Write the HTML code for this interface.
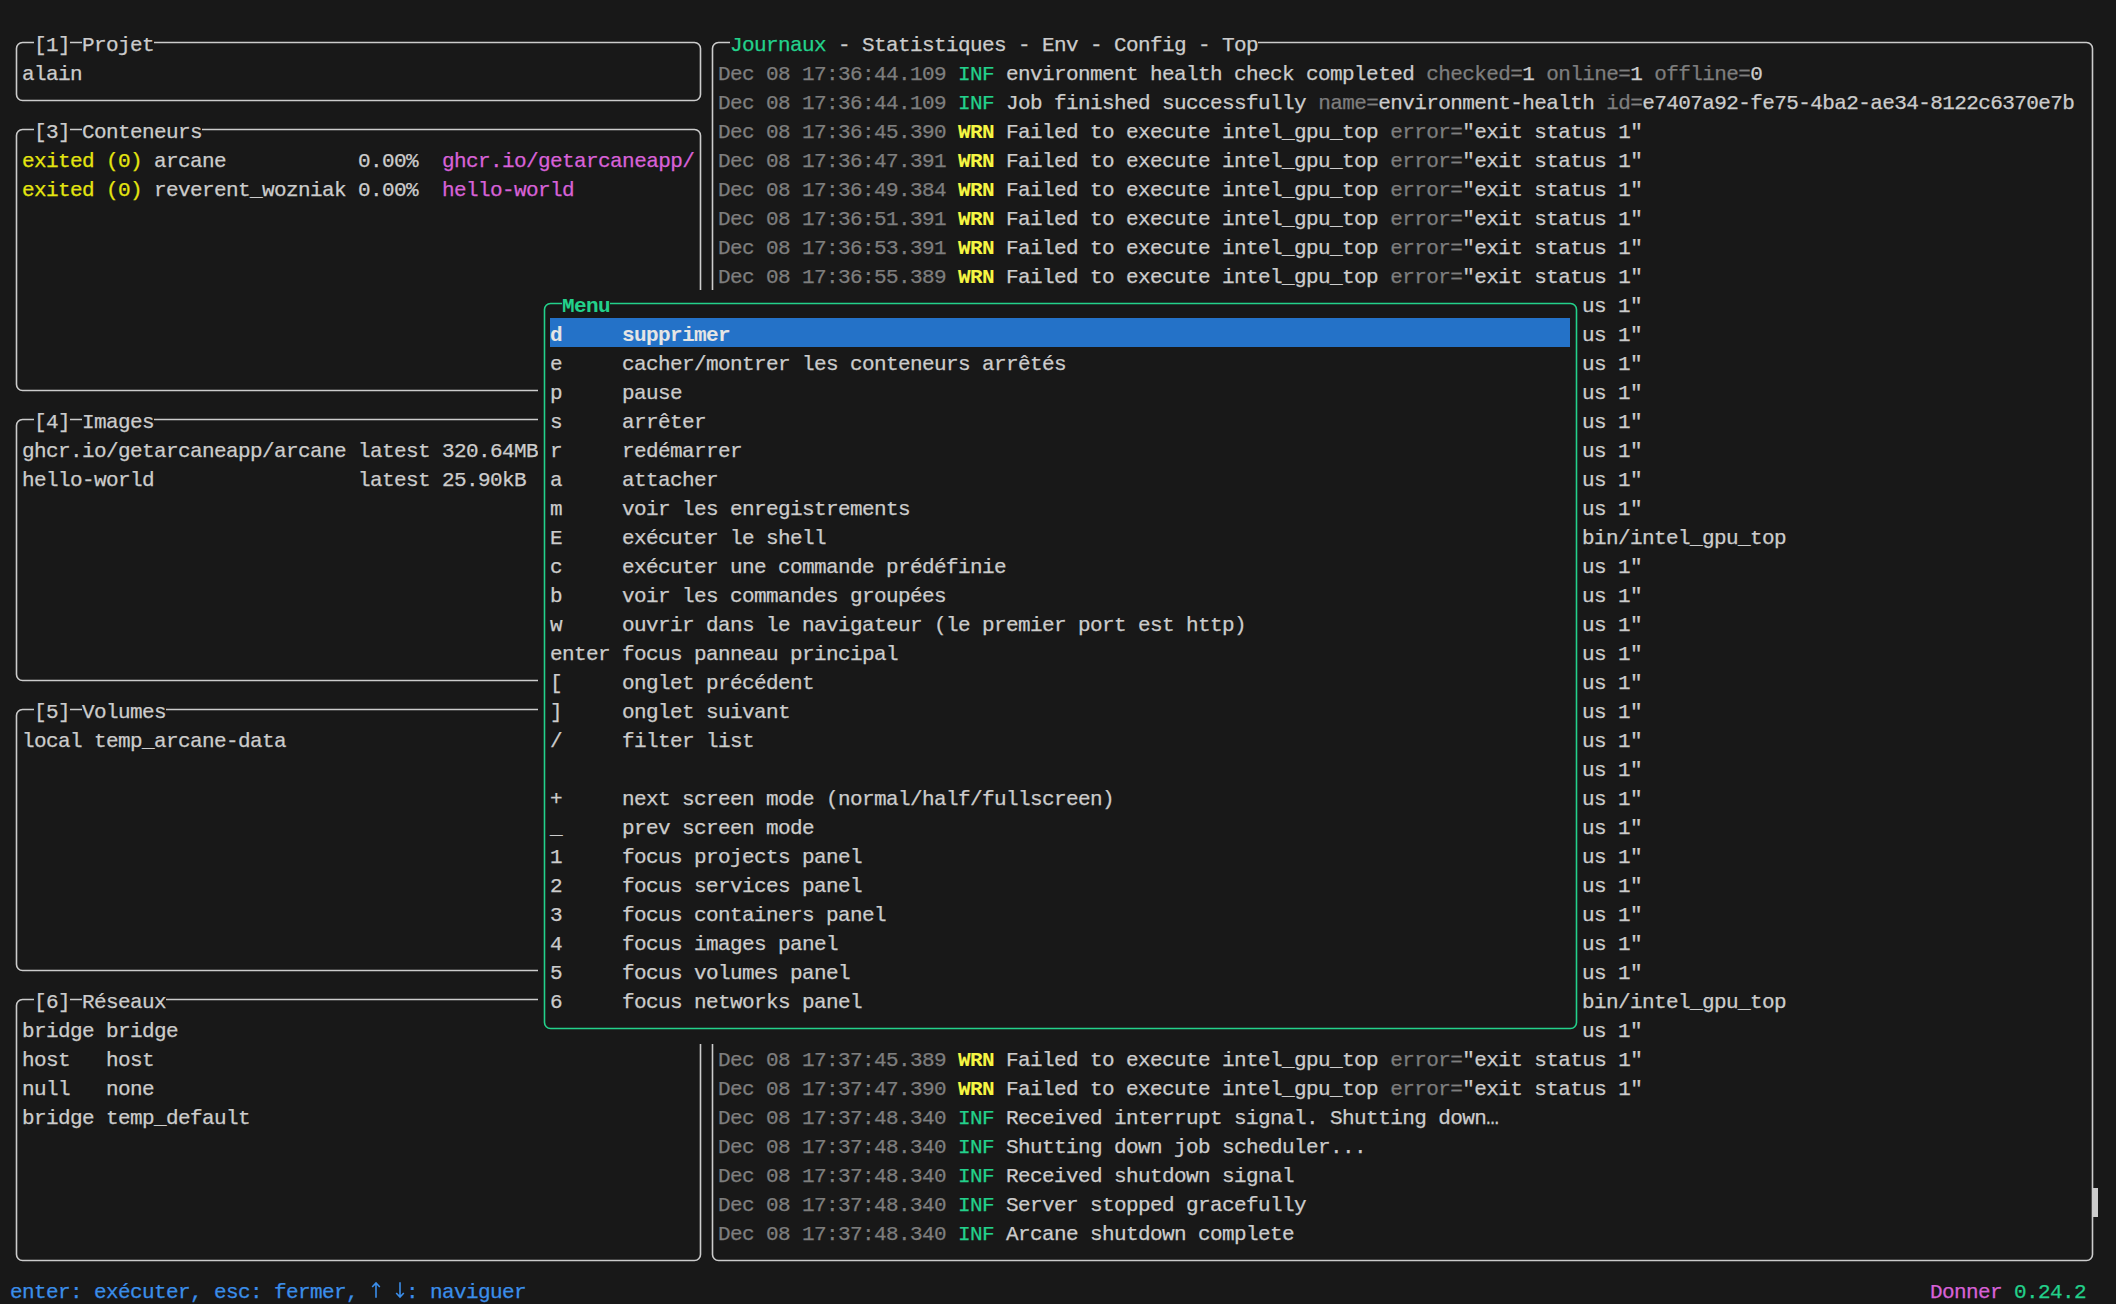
<!DOCTYPE html>
<html><head><meta charset="utf-8"><style>
html,body{margin:0;padding:0;background:#181818;width:2116px;height:1304px;overflow:hidden}
.t{position:absolute;white-space:pre;font-family:"Liberation Mono",monospace;font-size:21px;letter-spacing:-0.6px;line-height:29px;height:29px;color:#cccccc;padding-top:2px;-webkit-text-stroke:0.25px currentColor}
.l{position:absolute}
.b{position:absolute;box-sizing:border-box;border:2px solid;border-radius:6px}
.c{position:absolute;background:#181818}
.s{position:absolute;overflow:visible}
</style></head><body>
<svg class="s" style="left:10px;top:29px" width="696" height="87"><rect x="6.5" y="13.5" width="684" height="58" rx="6" ry="6" fill="none" stroke="#cccccc" stroke-width="1.6"/></svg>
<div class="c" style="left:34px;top:29px;width:36px;height:29px"></div>
<div class="c" style="left:82px;top:29px;width:72px;height:29px"></div>
<div class="t" style="left:34px;top:29px"><span style="color:#cccccc">[1]</span></div>
<div class="t" style="left:82px;top:29px"><span style="color:#cccccc">Projet</span></div>
<div class="t" style="left:22px;top:58px"><span style="color:#cccccc">alain</span></div>
<svg class="s" style="left:10px;top:116px" width="696" height="290"><rect x="6.5" y="13.5" width="684" height="261" rx="6" ry="6" fill="none" stroke="#cccccc" stroke-width="1.6"/></svg>
<div class="c" style="left:34px;top:116px;width:36px;height:29px"></div>
<div class="c" style="left:82px;top:116px;width:120px;height:29px"></div>
<div class="t" style="left:34px;top:116px"><span style="color:#cccccc">[3]</span></div>
<div class="t" style="left:82px;top:116px"><span style="color:#cccccc">Conteneurs</span></div>
<div class="t" style="left:22px;top:145px"><span style="color:#e5e510">exited (0) </span><span style="color:#cccccc">arcane           </span><span style="color:#cccccc">0.00%  </span><span style="color:#d862d8">ghcr.io/getarcaneapp/</span></div>
<div class="t" style="left:22px;top:174px"><span style="color:#e5e510">exited (0) </span><span style="color:#cccccc">reverent_wozniak </span><span style="color:#cccccc">0.00%  </span><span style="color:#d862d8">hello-world</span></div>
<svg class="s" style="left:10px;top:406px" width="696" height="290"><rect x="6.5" y="13.5" width="684" height="261" rx="6" ry="6" fill="none" stroke="#cccccc" stroke-width="1.6"/></svg>
<div class="c" style="left:34px;top:406px;width:36px;height:29px"></div>
<div class="c" style="left:82px;top:406px;width:72px;height:29px"></div>
<div class="t" style="left:34px;top:406px"><span style="color:#cccccc">[4]</span></div>
<div class="t" style="left:82px;top:406px"><span style="color:#cccccc">Images</span></div>
<div class="t" style="left:22px;top:435px"><span style="color:#cccccc">ghcr.io/getarcaneapp/arcane latest 320.64MB</span></div>
<div class="t" style="left:22px;top:464px"><span style="color:#cccccc">hello-world                 latest 25.90kB</span></div>
<svg class="s" style="left:10px;top:696px" width="696" height="290"><rect x="6.5" y="13.5" width="684" height="261" rx="6" ry="6" fill="none" stroke="#cccccc" stroke-width="1.6"/></svg>
<div class="c" style="left:34px;top:696px;width:36px;height:29px"></div>
<div class="c" style="left:82px;top:696px;width:84px;height:29px"></div>
<div class="t" style="left:34px;top:696px"><span style="color:#cccccc">[5]</span></div>
<div class="t" style="left:82px;top:696px"><span style="color:#cccccc">Volumes</span></div>
<div class="t" style="left:22px;top:725px"><span style="color:#cccccc">local temp_arcane-data</span></div>
<svg class="s" style="left:10px;top:986px" width="696" height="290"><rect x="6.5" y="13.5" width="684" height="261" rx="6" ry="6" fill="none" stroke="#cccccc" stroke-width="1.6"/></svg>
<div class="c" style="left:34px;top:986px;width:36px;height:29px"></div>
<div class="c" style="left:82px;top:986px;width:84px;height:29px"></div>
<div class="t" style="left:34px;top:986px"><span style="color:#cccccc">[6]</span></div>
<div class="t" style="left:82px;top:986px"><span style="color:#cccccc">Réseaux</span></div>
<div class="t" style="left:22px;top:1015px"><span style="color:#cccccc">bridge bridge</span></div>
<div class="t" style="left:22px;top:1044px"><span style="color:#cccccc">host   host</span></div>
<div class="t" style="left:22px;top:1073px"><span style="color:#cccccc">null   none</span></div>
<div class="t" style="left:22px;top:1102px"><span style="color:#cccccc">bridge temp_default</span></div>
<svg class="s" style="left:706px;top:29px" width="1392" height="1247"><rect x="6.5" y="13.5" width="1380" height="1218" rx="6" ry="6" fill="none" stroke="#cccccc" stroke-width="1.6"/></svg>
<div class="c" style="left:730px;top:29px;width:528px;height:29px"></div>
<div class="t" style="left:730px;top:29px"><span style="color:#23d18b">Journaux</span><span style="color:#cccccc"> - Statistiques - Env - Config - Top</span></div>
<div class="t" style="left:718px;top:58px"><span style="color:#7e7e7e">Dec 08 17:36:44.109 </span><span style="color:#23d18b">INF </span><span style="color:#cccccc">environment health check completed </span><span style="color:#7e7e7e">checked=</span><span style="color:#cccccc">1 </span><span style="color:#7e7e7e">online=</span><span style="color:#cccccc">1 </span><span style="color:#7e7e7e">offline=</span><span style="color:#cccccc">0</span></div>
<div class="t" style="left:718px;top:87px"><span style="color:#7e7e7e">Dec 08 17:36:44.109 </span><span style="color:#23d18b">INF </span><span style="color:#cccccc">Job finished successfully </span><span style="color:#7e7e7e">name=</span><span style="color:#cccccc">environment-health </span><span style="color:#7e7e7e">id=</span><span style="color:#cccccc">e7407a92-fe75-4ba2-ae34-8122c6370e7b</span></div>
<div class="t" style="left:718px;top:116px"><span style="color:#7e7e7e">Dec 08 17:36:45.390 </span><span style="color:#f5f543;font-weight:bold;-webkit-text-stroke:0.05px currentColor">WRN </span><span style="color:#cccccc">Failed to execute intel_gpu_top </span><span style="color:#7e7e7e">error=</span><span style="color:#cccccc">&quot;exit status 1&quot;</span></div>
<div class="t" style="left:718px;top:145px"><span style="color:#7e7e7e">Dec 08 17:36:47.391 </span><span style="color:#f5f543;font-weight:bold;-webkit-text-stroke:0.05px currentColor">WRN </span><span style="color:#cccccc">Failed to execute intel_gpu_top </span><span style="color:#7e7e7e">error=</span><span style="color:#cccccc">&quot;exit status 1&quot;</span></div>
<div class="t" style="left:718px;top:174px"><span style="color:#7e7e7e">Dec 08 17:36:49.384 </span><span style="color:#f5f543;font-weight:bold;-webkit-text-stroke:0.05px currentColor">WRN </span><span style="color:#cccccc">Failed to execute intel_gpu_top </span><span style="color:#7e7e7e">error=</span><span style="color:#cccccc">&quot;exit status 1&quot;</span></div>
<div class="t" style="left:718px;top:203px"><span style="color:#7e7e7e">Dec 08 17:36:51.391 </span><span style="color:#f5f543;font-weight:bold;-webkit-text-stroke:0.05px currentColor">WRN </span><span style="color:#cccccc">Failed to execute intel_gpu_top </span><span style="color:#7e7e7e">error=</span><span style="color:#cccccc">&quot;exit status 1&quot;</span></div>
<div class="t" style="left:718px;top:232px"><span style="color:#7e7e7e">Dec 08 17:36:53.391 </span><span style="color:#f5f543;font-weight:bold;-webkit-text-stroke:0.05px currentColor">WRN </span><span style="color:#cccccc">Failed to execute intel_gpu_top </span><span style="color:#7e7e7e">error=</span><span style="color:#cccccc">&quot;exit status 1&quot;</span></div>
<div class="t" style="left:718px;top:261px"><span style="color:#7e7e7e">Dec 08 17:36:55.389 </span><span style="color:#f5f543;font-weight:bold;-webkit-text-stroke:0.05px currentColor">WRN </span><span style="color:#cccccc">Failed to execute intel_gpu_top </span><span style="color:#7e7e7e">error=</span><span style="color:#cccccc">&quot;exit status 1&quot;</span></div>
<div class="t" style="left:1582px;top:290px"><span style="color:#cccccc">us 1&quot;</span></div>
<div class="t" style="left:1582px;top:319px"><span style="color:#cccccc">us 1&quot;</span></div>
<div class="t" style="left:1582px;top:348px"><span style="color:#cccccc">us 1&quot;</span></div>
<div class="t" style="left:1582px;top:377px"><span style="color:#cccccc">us 1&quot;</span></div>
<div class="t" style="left:1582px;top:406px"><span style="color:#cccccc">us 1&quot;</span></div>
<div class="t" style="left:1582px;top:435px"><span style="color:#cccccc">us 1&quot;</span></div>
<div class="t" style="left:1582px;top:464px"><span style="color:#cccccc">us 1&quot;</span></div>
<div class="t" style="left:1582px;top:493px"><span style="color:#cccccc">us 1&quot;</span></div>
<div class="t" style="left:1582px;top:522px"><span style="color:#cccccc">bin/intel_gpu_top</span></div>
<div class="t" style="left:1582px;top:551px"><span style="color:#cccccc">us 1&quot;</span></div>
<div class="t" style="left:1582px;top:580px"><span style="color:#cccccc">us 1&quot;</span></div>
<div class="t" style="left:1582px;top:609px"><span style="color:#cccccc">us 1&quot;</span></div>
<div class="t" style="left:1582px;top:638px"><span style="color:#cccccc">us 1&quot;</span></div>
<div class="t" style="left:1582px;top:667px"><span style="color:#cccccc">us 1&quot;</span></div>
<div class="t" style="left:1582px;top:696px"><span style="color:#cccccc">us 1&quot;</span></div>
<div class="t" style="left:1582px;top:725px"><span style="color:#cccccc">us 1&quot;</span></div>
<div class="t" style="left:1582px;top:754px"><span style="color:#cccccc">us 1&quot;</span></div>
<div class="t" style="left:1582px;top:783px"><span style="color:#cccccc">us 1&quot;</span></div>
<div class="t" style="left:1582px;top:812px"><span style="color:#cccccc">us 1&quot;</span></div>
<div class="t" style="left:1582px;top:841px"><span style="color:#cccccc">us 1&quot;</span></div>
<div class="t" style="left:1582px;top:870px"><span style="color:#cccccc">us 1&quot;</span></div>
<div class="t" style="left:1582px;top:899px"><span style="color:#cccccc">us 1&quot;</span></div>
<div class="t" style="left:1582px;top:928px"><span style="color:#cccccc">us 1&quot;</span></div>
<div class="t" style="left:1582px;top:957px"><span style="color:#cccccc">us 1&quot;</span></div>
<div class="t" style="left:1582px;top:986px"><span style="color:#cccccc">bin/intel_gpu_top</span></div>
<div class="t" style="left:1582px;top:1015px"><span style="color:#cccccc">us 1&quot;</span></div>
<div class="t" style="left:718px;top:1044px"><span style="color:#7e7e7e">Dec 08 17:37:45.389 </span><span style="color:#f5f543;font-weight:bold;-webkit-text-stroke:0.05px currentColor">WRN </span><span style="color:#cccccc">Failed to execute intel_gpu_top </span><span style="color:#7e7e7e">error=</span><span style="color:#cccccc">&quot;exit status 1&quot;</span></div>
<div class="t" style="left:718px;top:1073px"><span style="color:#7e7e7e">Dec 08 17:37:47.390 </span><span style="color:#f5f543;font-weight:bold;-webkit-text-stroke:0.05px currentColor">WRN </span><span style="color:#cccccc">Failed to execute intel_gpu_top </span><span style="color:#7e7e7e">error=</span><span style="color:#cccccc">&quot;exit status 1&quot;</span></div>
<div class="t" style="left:718px;top:1102px"><span style="color:#7e7e7e">Dec 08 17:37:48.340 </span><span style="color:#23d18b">INF </span><span style="color:#cccccc">Received interrupt signal. Shutting down…</span></div>
<div class="t" style="left:718px;top:1131px"><span style="color:#7e7e7e">Dec 08 17:37:48.340 </span><span style="color:#23d18b">INF </span><span style="color:#cccccc">Shutting down job scheduler...</span></div>
<div class="t" style="left:718px;top:1160px"><span style="color:#7e7e7e">Dec 08 17:37:48.340 </span><span style="color:#23d18b">INF </span><span style="color:#cccccc">Received shutdown signal</span></div>
<div class="t" style="left:718px;top:1189px"><span style="color:#7e7e7e">Dec 08 17:37:48.340 </span><span style="color:#23d18b">INF </span><span style="color:#cccccc">Server stopped gracefully</span></div>
<div class="t" style="left:718px;top:1218px"><span style="color:#7e7e7e">Dec 08 17:37:48.340 </span><span style="color:#23d18b">INF </span><span style="color:#cccccc">Arcane shutdown complete</span></div>
<div class="l" style="left:2092px;top:1188px;width:6px;height:29px;background:#cccccc"></div>
<div class="c" style="left:538px;top:290px;width:1044px;height:754px"></div>
<svg class="s" style="left:538px;top:290px" width="1044" height="754"><rect x="6.5" y="13.5" width="1032" height="725" rx="6" ry="6" fill="none" stroke="#23d18b" stroke-width="1.6"/></svg>
<div class="c" style="left:562px;top:290px;width:48px;height:29px"></div>
<div class="t" style="left:562px;top:290px"><span style="color:#23d18b;font-weight:bold;-webkit-text-stroke:0.05px currentColor">Menu</span></div>
<div class="l" style="left:550px;top:318px;width:1020px;height:29px;background:#2472c8"></div>
<div class="t" style="left:550px;top:319px"><span style="color:#e5e5e5;font-weight:bold;-webkit-text-stroke:0.05px currentColor">d</span></div>
<div class="t" style="left:622px;top:319px"><span style="color:#e5e5e5;font-weight:bold;-webkit-text-stroke:0.05px currentColor">supprimer</span></div>
<div class="t" style="left:550px;top:348px"><span style="color:#cccccc">e</span></div>
<div class="t" style="left:622px;top:348px"><span style="color:#cccccc">cacher/montrer les conteneurs arrêtés</span></div>
<div class="t" style="left:550px;top:377px"><span style="color:#cccccc">p</span></div>
<div class="t" style="left:622px;top:377px"><span style="color:#cccccc">pause</span></div>
<div class="t" style="left:550px;top:406px"><span style="color:#cccccc">s</span></div>
<div class="t" style="left:622px;top:406px"><span style="color:#cccccc">arrêter</span></div>
<div class="t" style="left:550px;top:435px"><span style="color:#cccccc">r</span></div>
<div class="t" style="left:622px;top:435px"><span style="color:#cccccc">redémarrer</span></div>
<div class="t" style="left:550px;top:464px"><span style="color:#cccccc">a</span></div>
<div class="t" style="left:622px;top:464px"><span style="color:#cccccc">attacher</span></div>
<div class="t" style="left:550px;top:493px"><span style="color:#cccccc">m</span></div>
<div class="t" style="left:622px;top:493px"><span style="color:#cccccc">voir les enregistrements</span></div>
<div class="t" style="left:550px;top:522px"><span style="color:#cccccc">E</span></div>
<div class="t" style="left:622px;top:522px"><span style="color:#cccccc">exécuter le shell</span></div>
<div class="t" style="left:550px;top:551px"><span style="color:#cccccc">c</span></div>
<div class="t" style="left:622px;top:551px"><span style="color:#cccccc">exécuter une commande prédéfinie</span></div>
<div class="t" style="left:550px;top:580px"><span style="color:#cccccc">b</span></div>
<div class="t" style="left:622px;top:580px"><span style="color:#cccccc">voir les commandes groupées</span></div>
<div class="t" style="left:550px;top:609px"><span style="color:#cccccc">w</span></div>
<div class="t" style="left:622px;top:609px"><span style="color:#cccccc">ouvrir dans le navigateur (le premier port est http)</span></div>
<div class="t" style="left:550px;top:638px"><span style="color:#cccccc">enter</span></div>
<div class="t" style="left:622px;top:638px"><span style="color:#cccccc">focus panneau principal</span></div>
<div class="t" style="left:550px;top:667px"><span style="color:#cccccc">[</span></div>
<div class="t" style="left:622px;top:667px"><span style="color:#cccccc">onglet précédent</span></div>
<div class="t" style="left:550px;top:696px"><span style="color:#cccccc">]</span></div>
<div class="t" style="left:622px;top:696px"><span style="color:#cccccc">onglet suivant</span></div>
<div class="t" style="left:550px;top:725px"><span style="color:#cccccc">/</span></div>
<div class="t" style="left:622px;top:725px"><span style="color:#cccccc">filter list</span></div>
<div class="t" style="left:550px;top:783px"><span style="color:#cccccc">+</span></div>
<div class="t" style="left:622px;top:783px"><span style="color:#cccccc">next screen mode (normal/half/fullscreen)</span></div>
<div class="t" style="left:550px;top:812px"><span style="color:#cccccc">_</span></div>
<div class="t" style="left:622px;top:812px"><span style="color:#cccccc">prev screen mode</span></div>
<div class="t" style="left:550px;top:841px"><span style="color:#cccccc">1</span></div>
<div class="t" style="left:622px;top:841px"><span style="color:#cccccc">focus projects panel</span></div>
<div class="t" style="left:550px;top:870px"><span style="color:#cccccc">2</span></div>
<div class="t" style="left:622px;top:870px"><span style="color:#cccccc">focus services panel</span></div>
<div class="t" style="left:550px;top:899px"><span style="color:#cccccc">3</span></div>
<div class="t" style="left:622px;top:899px"><span style="color:#cccccc">focus containers panel</span></div>
<div class="t" style="left:550px;top:928px"><span style="color:#cccccc">4</span></div>
<div class="t" style="left:622px;top:928px"><span style="color:#cccccc">focus images panel</span></div>
<div class="t" style="left:550px;top:957px"><span style="color:#cccccc">5</span></div>
<div class="t" style="left:622px;top:957px"><span style="color:#cccccc">focus volumes panel</span></div>
<div class="t" style="left:550px;top:986px"><span style="color:#cccccc">6</span></div>
<div class="t" style="left:622px;top:986px"><span style="color:#cccccc">focus networks panel</span></div>
<div class="t" style="left:10px;top:1276px"><span style="color:#3b8eea">enter: exécuter, esc: fermer,    : naviguer</span></div>
<svg class="s" style="left:0;top:1270px" width="420" height="34"><path d="M376 27.7 L376 12.8 M372.2 17 L376 12.9 L379.8 17 M400 12.2 L400 27.2 M396.2 23 L400 27.1 L403.8 23" fill="none" stroke="#3b8eea" stroke-width="1.6"/></svg>
<div class="t" style="left:1930px;top:1276px"><span style="color:#d862d8">Donner</span><span style="color:#cccccc"> </span><span style="color:#23d18b">0.24.2</span></div>
</body></html>
